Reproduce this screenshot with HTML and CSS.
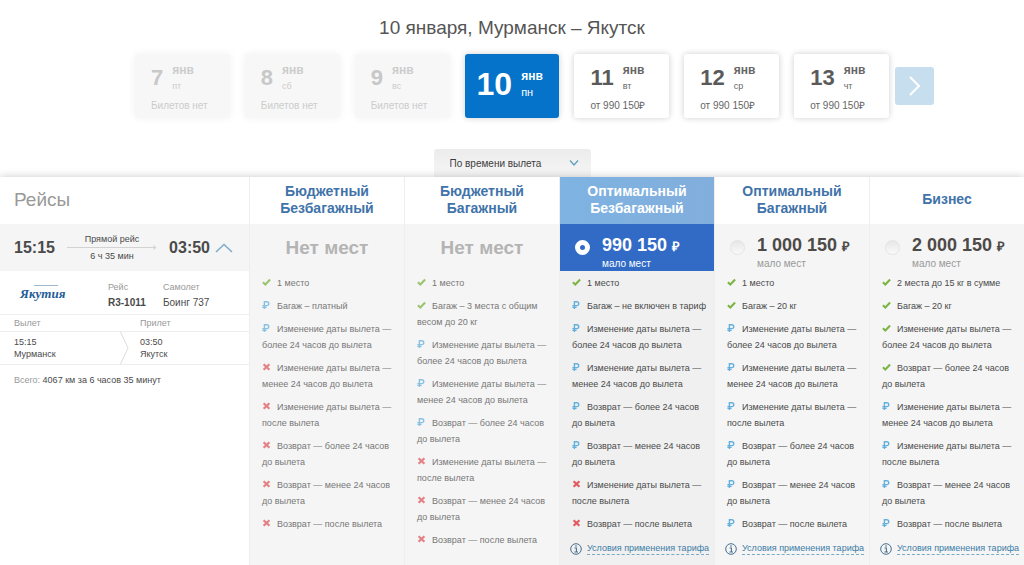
FILE: index.html
```html
<!DOCTYPE html>
<html lang="ru">
<head>
<meta charset="utf-8">
<meta name="viewport" content="width=device-width, initial-scale=1">
<title>10 января, Мурманск – Якутск</title>
<link rel="stylesheet" href="styles.css">
</head>
<body>
<svg class="sprite" aria-hidden="true">
  <symbol id="yes" viewBox="0 0 9 8"><path d="M.9 4.3 3.3 6.5 8.1 1.5" fill="none" stroke="#7cb342" stroke-width="2"/></symbol>
  <symbol id="no" viewBox="0 0 9 8"><path d="M1.6 1.2 7.4 6.8M7.4 1.2 1.6 6.8" fill="none" stroke="#e05a5f" stroke-width="2.2"/></symbol>
  <symbol id="rub" viewBox="0 0 9 8"><path d="M2.4 8V.8H4.8C7.4.8 7.4 4.6 4.8 4.6H.4M.4 6.4H4.6" fill="none" stroke="#64b0dc" stroke-width="1.4"/></symbol>
  <symbol id="info" viewBox="0 0 12 12"><circle cx="6" cy="6" r="5.3" fill="none" stroke="#48708f" stroke-width="1"/><path d="M4.6 5H6.4V8.8M4.4 9H8" fill="none" stroke="#48708f" stroke-width="1.1"/><circle cx="6" cy="3" r=".8" fill="#48708f"/></symbol>
</svg>

<header class="top">
  <h1 class="title">10 января, Мурманск – Якутск</h1>
  <nav class="dates" aria-label="Даты вылета">
    <ul class="days">
      <li><button class="day day-off" disabled><b class="num">7</b><span class="when"><b>янв</b><span>пт</span></span><span class="cost">Билетов нет</span></button></li>
      <li><button class="day day-off" disabled><b class="num">8</b><span class="when"><b>янв</b><span>сб</span></span><span class="cost">Билетов нет</span></button></li>
      <li><button class="day day-off" disabled><b class="num">9</b><span class="when"><b>янв</b><span>вс</span></span><span class="cost">Билетов нет</span></button></li>
      <li><button class="day day-on" aria-current="date"><b class="num">10</b><span class="when"><b>янв</b><span>пн</span></span></button></li>
      <li><button class="day"><b class="num">11</b><span class="when"><b>янв</b><span>вт</span></span><span class="cost">от 990 150₽</span></button></li>
      <li><button class="day"><b class="num">12</b><span class="when"><b>янв</b><span>ср</span></span><span class="cost">от 990 150₽</span></button></li>
      <li><button class="day"><b class="num">13</b><span class="when"><b>янв</b><span>чт</span></span><span class="cost">от 990 150₽</span></button></li>
    </ul>
    <button class="next" aria-label="Следующие даты"><svg width="12" height="20" viewBox="0 0 12 20"><path d="M1 1 10 10 1 19" fill="none" stroke="#fff" stroke-width="2"/></svg></button>
  </nav>
  <div class="sort">
    <select class="sort-select" aria-label="Сортировка"><option>По времени вылета</option></select>
    <svg class="sort-arrow" width="10" height="6" viewBox="0 0 10 6"><path d="M1 .5 5 5 9 .5" fill="none" stroke="#5fa0bd" stroke-width="1.3"/></svg>
  </div>
</header>

<main>
<table class="fares">
  <colgroup><col class="col-flight"><col><col><col><col><col></colgroup>
  <thead>
    <tr>
      <th class="flights" scope="col">Рейсы</th>
      <th scope="col">Бюджетный<br>Безбагажный</th>
      <th scope="col">Бюджетный<br>Багажный</th>
      <th class="picked" scope="col">Оптимальный<br>Безбагажный</th>
      <th scope="col">Оптимальный<br>Багажный</th>
      <th scope="col">Бизнес</th>
    </tr>
  </thead>
  <tbody>
    <tr class="prices">
      <td>
        <div class="summary">
          <b class="time">15:15</b>
          <div class="route">
            <span>Прямой рейс</span>
            <svg class="line" height="5" width="90" viewBox="0 0 90 5"><path d="M0 2.5H89M86 .5 89 2.5 86 4.5" fill="none" stroke="#d2d2d2"/></svg>
            <span>6 ч 35 мин</span>
          </div>
          <b class="time">03:50</b>
          <button class="fold" aria-label="Свернуть"><svg width="18" height="10" viewBox="0 0 18 10"><path d="M1 9 9 1.5 17 9" fill="none" stroke="#78aacb" stroke-width="1.4"/></svg></button>
        </div>
      </td>
      <td class="none">Нет мест</td>
      <td class="none">Нет мест</td>
      <td class="picked"><label class="price"><input type="radio" name="fare" checked><span class="sum">990 150 <small>₽</small></span><span class="few">мало мест</span></label></td>
      <td><label class="price"><input type="radio" name="fare"><span class="sum">1 000 150 <small>₽</small></span><span class="few">мало мест</span></label></td>
      <td><label class="price"><input type="radio" name="fare"><span class="sum">2 000 150 <small>₽</small></span><span class="few">мало мест</span></label></td>
    </tr>
    <tr class="details">
      <td class="info">
        <div class="plane">
          <div class="logo">
            <svg width="26" height="3" viewBox="0 0 26 3" aria-hidden="true"><path d="M2 1.5H26" stroke="#9db9d3" stroke-width="1"/></svg>
            <span>Якутия</span>
          </div>
          <dl><dt>Рейс</dt><dd><b>R3-1011</b></dd></dl>
          <dl><dt>Самолет</dt><dd>Боинг 737</dd></dl>
        </div>
        <div class="ends head"><span>Вылет</span><span>Прилет</span></div>
        <div class="ends stops">
          <span>15:15<br>Мурманск</span>
          <svg width="9" height="32" viewBox="0 0 9 32"><path d="M.5 0 8 16 .5 32" fill="none" stroke="#dcdcdc"/></svg>
          <span>03:50<br>Якутск</span>
        </div>
        <p class="total"><span>Всего:</span> 4067 км за 6 часов 35 минут</p>
      </td>
      <td class="sold">
        <ul class="rules">
          <li><svg><use href="#yes"/></svg>1 место</li>
          <li><svg><use href="#rub"/></svg>Багаж – платный</li>
          <li><svg><use href="#rub"/></svg>Изменение даты вылета —<br>более 24 часов до вылета</li>
          <li><svg><use href="#no"/></svg>Изменение даты вылета —<br>менее 24 часов до вылета</li>
          <li><svg><use href="#no"/></svg>Изменение даты вылета —<br>после вылета</li>
          <li><svg><use href="#no"/></svg>Возврат — более 24 часов<br>до вылета</li>
          <li><svg><use href="#no"/></svg>Возврат — менее 24 часов<br>до вылета</li>
          <li><svg><use href="#no"/></svg>Возврат — после вылета</li>
        </ul>
      </td>
      <td class="sold">
        <ul class="rules">
          <li><svg><use href="#yes"/></svg>1 место</li>
          <li><svg><use href="#yes"/></svg>Багаж – 3 места с общим<br>весом до 20 кг</li>
          <li><svg><use href="#rub"/></svg>Изменение даты вылета —<br>более 24 часов до вылета</li>
          <li><svg><use href="#rub"/></svg>Изменение даты вылета —<br>менее 24 часов до вылета</li>
          <li><svg><use href="#rub"/></svg>Возврат — более 24 часов<br>до вылета</li>
          <li><svg><use href="#no"/></svg>Изменение даты вылета —<br>после вылета</li>
          <li><svg><use href="#no"/></svg>Возврат — менее 24 часов<br>до вылета</li>
          <li><svg><use href="#no"/></svg>Возврат — после вылета</li>
        </ul>
      </td>
      <td class="picked">
        <ul class="rules">
          <li><svg><use href="#yes"/></svg>1 место</li>
          <li><svg><use href="#rub"/></svg>Багаж – не включен в тариф</li>
          <li><svg><use href="#rub"/></svg>Изменение даты вылета —<br>более 24 часов до вылета</li>
          <li><svg><use href="#rub"/></svg>Изменение даты вылета —<br>менее 24 часов до вылета</li>
          <li><svg><use href="#rub"/></svg>Возврат — более 24 часов<br>до вылета</li>
          <li><svg><use href="#rub"/></svg>Возврат — менее 24 часов<br>до вылета</li>
          <li><svg><use href="#no"/></svg>Изменение даты вылета —<br>после вылета</li>
          <li><svg><use href="#no"/></svg>Возврат — после вылета</li>
        </ul>
        <div class="terms"><svg><use href="#info"/></svg><a href="#terms">Условия применения тарифа</a></div>
      </td>
      <td>
        <ul class="rules">
          <li><svg><use href="#yes"/></svg>1 место</li>
          <li><svg><use href="#yes"/></svg>Багаж – 20 кг</li>
          <li><svg><use href="#rub"/></svg>Изменение даты вылета —<br>более 24 часов до вылета</li>
          <li><svg><use href="#rub"/></svg>Изменение даты вылета —<br>менее 24 часов до вылета</li>
          <li><svg><use href="#rub"/></svg>Изменение даты вылета —<br>после вылета</li>
          <li><svg><use href="#rub"/></svg>Возврат — более 24 часов<br>до вылета</li>
          <li><svg><use href="#rub"/></svg>Возврат — менее 24 часов<br>до вылета</li>
          <li><svg><use href="#rub"/></svg>Возврат — после вылета</li>
        </ul>
        <div class="terms"><svg><use href="#info"/></svg><a href="#terms">Условия применения тарифа</a></div>
      </td>
      <td>
        <ul class="rules">
          <li><svg><use href="#yes"/></svg>2 места до 15 кг в сумме</li>
          <li><svg><use href="#yes"/></svg>Багаж – 20 кг</li>
          <li><svg><use href="#yes"/></svg>Изменение даты вылета —<br>более 24 часов до вылета</li>
          <li><svg><use href="#yes"/></svg>Возврат — более 24 часов<br>до вылета</li>
          <li><svg><use href="#rub"/></svg>Изменение даты вылета —<br>менее 24 часов до вылета</li>
          <li><svg><use href="#rub"/></svg>Изменение даты вылета —<br>после вылета</li>
          <li><svg><use href="#rub"/></svg>Возврат — менее 24 часов<br>до вылета</li>
          <li><svg><use href="#rub"/></svg>Возврат — после вылета</li>
        </ul>
        <div class="terms"><svg><use href="#info"/></svg><a href="#terms">Условия применения тарифа</a></div>
      </td>
    </tr>
  </tbody>
</table>
</main>
</body>
</html>
```
FILE: styles.css
```css
* { box-sizing: border-box; }

body {
  margin: 0;
  background: #fff;
  color: #4a4a4a;
  font: 9px/16px "Liberation Sans", Arial, sans-serif;
}

ul, dl, dd, p { margin: 0; padding: 0; list-style: none; }

button {
  border: 0;
  padding: 0;
  background: none;
  color: inherit;
  font: inherit;
}

.sprite { display: block; width: 0; height: 0; }

.top { display: flex; flex-direction: column; }

.title {
  margin: 16px 0 15px;
  color: #555;
  font-size: 19px;
  font-weight: 400;
  line-height: 23px;
  text-align: center;
}

/* Date strip */
.dates {
  display: grid;
  grid-template-columns: 1fr minmax(0, 754px) 1fr;
  align-items: center;
  gap: 6px;
}

.days {
  grid-column: 2;
  display: grid;
  grid-template-columns: repeat(7, 1fr);
  gap: 15px;
}

.day {
  display: grid;
  grid-template-columns: auto 1fr;
  grid-template-rows: 1fr auto;
  column-gap: 9px;
  width: 100%;
  height: 64px;
  padding: 8px 0 4px 16px;
  border-radius: 3px;
  background: #fff;
  box-shadow: 0 0 6px rgba(0, 0, 0, .2);
  color: #666;
  text-align: left;
}

.num { color: #5a5a5a; font-size: 22px; line-height: 32px; }
.when { display: flex; flex-direction: column; line-height: 16px; }
.when b { font-size: 12px; }
.cost { grid-column: 1 / 3; font-size: 10px; line-height: 16px; }

.day-off { background: #f7f7f7; box-shadow: 0 0 8px rgba(0, 0, 0, .06); color: #ccc; }
.day-off .num { color: #c8c8c8; }

.day-on { padding: 14px 0 14px 12px; background: #0573ca; color: #fff; }
.day-on .num { color: #fff; font-size: 32px; }
.day-on .when span { font-size: 11px; }

.next {
  display: grid;
  place-items: center;
  width: 39px;
  height: 38px;
  border-radius: 3px;
  background: #c6deed;
}

/* Sort drop-down */
.sort {
  display: grid;
  align-items: center;
  align-self: center;
  width: 157px;
  margin: 31px 0 0;
}

.sort-select {
  grid-area: 1 / 1;
  appearance: none;
  width: 100%;
  height: 28px;
  padding: 0 24px 0 16px;
  border: 0;
  border-radius: 3px 3px 0 0;
  background: linear-gradient(#ececec, #f6f6f6);
  color: #3c3c3c;
  font: 10px "Liberation Sans", Arial, sans-serif;
}

.sort-arrow {
  grid-area: 1 / 1;
  justify-self: end;
  margin-right: 12px;
  pointer-events: none;
}

/* Fare table */
.fares {
  position: relative;
  width: 100%;
  border-spacing: 0;
  table-layout: fixed;
  background: #fff;
  box-shadow: 0 0 8px rgba(0, 0, 0, .22);
}

.col-flight { width: 249px; }

.fares th {
  height: 47px;
  padding: 0 0 2px;
  border-left: 1px solid #eee;
  color: #3f73a9;
  font-size: 14px;
  line-height: 17px;
}

.fares .flights {
  padding-left: 14px;
  border: 0;
  color: #999;
  font-size: 19px;
  font-weight: 400;
  text-align: left;
}

.fares th.picked { background: linear-gradient(to right, #7eb3e2, #82aedc); color: #fff; }

.fares td {
  padding: 0;
  border-left: 1px solid #eee;
  background: #f5f5f5;
  vertical-align: top;
}

.fares td:first-child { border-left: 0; }

.prices td { height: 47px; }

.fares .none {
  color: #b4b4b4;
  font-size: 19px;
  font-weight: 700;
  text-align: center;
  vertical-align: middle;
}

.fares .prices .picked { background: #316bc5; color: #fff; }
.details .picked { background: #f0f0f0; }

.price {
  display: grid;
  grid-template-columns: 15px 1fr;
  column-gap: 12px;
  padding: 10px 0 0 15px;
}

.price input {
  appearance: none;
  width: 15px;
  height: 15px;
  margin: 6px 0 0;
  border: 1px solid #e4e4e4;
  border-radius: 50%;
  background: linear-gradient(#e6e6e6, #fafafa);
}

.price input:checked { border: 5px solid #fff; background: #316bc5; }

.sum {
  color: #4d4a48;
  font-size: 18px;
  font-weight: 700;
  line-height: 23px;
  white-space: nowrap;
}

.sum small { font-size: 13px; }
.few { grid-column: 2; color: #999; font-size: 10px; line-height: 12px; }
.picked .sum, .picked .few { color: #fff; }

/* Flight column */
.summary {
  display: flex;
  align-items: center;
  height: 47px;
  padding: 0 16px 0 14px;
}

.time { font-size: 16px; }

.route {
  display: flex;
  flex: 1;
  flex-direction: column;
  align-items: center;
  line-height: 12px;
}

.line { width: 90px; }
.fold { display: flex; margin-left: 5px; }

.details td.info { background: #fff; }

.plane {
  display: grid;
  grid-template-columns: 88px 55px 1fr;
  height: 44px;
  padding: 8px 0 0 20px;
  border-bottom: 1px solid #eee;
}

.logo {
  display: flex;
  flex-direction: column;
  align-items: flex-start;
  padding-top: 5px;
  color: #235c96;
  font: italic 700 13px/14px "Liberation Serif", serif;
}

.logo svg { margin-left: 12px; }

dt, .head, .total span { color: #999; }
dd { font-size: 10px; }

.ends {
  display: grid;
  grid-template-columns: 1fr 109px;
  padding-left: 14px;
  border-bottom: 1px solid #eee;
}

.stops {
  grid-template-columns: 1fr 20px 109px;
  align-items: center;
  line-height: 12px;
}

.total { padding: 7px 0 0 14px; }

/* Fare conditions */
.rules { display: grid; gap: 7px; padding: 4px 0 0 12px; white-space: nowrap; }
.rules svg { width: 9px; height: 8px; margin-right: 6px; }
.sold { color: #777; }
.sold svg { opacity: .75; }

.terms {
  display: flex;
  align-items: center;
  gap: 5px;
  padding: 11px 0 10px 10px;
  white-space: nowrap;
}

.terms svg { width: 12px; height: 12px; }
.terms a { border-bottom: 1px dashed #78aac8; color: #3b7ca5; line-height: 11px; text-decoration: none; }
```
